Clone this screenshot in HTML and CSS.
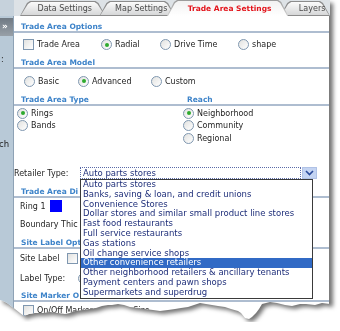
FILE: index.html
```html
<!DOCTYPE html>
<html lang="en">
<head>
  <meta charset="UTF-8" />
  <title>Trade Area Settings</title>
  <link rel="stylesheet" href="styles.css">
</head>
<body>
  <div class="shot">
    <div class="window">
      <div class="tabbar">
        <div class="tab tab-data"><span>Data Settings</span></div>
        <div class="tab tab-map"><span>Map Settings</span></div>
        <div class="tab tab-active"><span>Trade Area Settings</span></div>
        <div class="tab tab-layers"><span>Layers</span></div>
      </div>

      <div class="body">
        <div class="strip">
          <div class="collapse">&raquo;</div>
          <div class="frag-dot">:</div>
          <div class="frag-text">ch</div>
        </div>

        <div class="panel">
          <div class="sec sec-first">Trade Area Options</div>
          <div class="row row-opts">
            <label class="opt w78"><i class="check"></i>Trade Area</label>
            <label class="opt w59"><i class="radio on"></i>Radial</label>
            <label class="opt w78"><i class="radio"></i>Drive Time</label>
            <label class="opt"><i class="radio"></i>shape</label>
          </div>

          <div class="sec">Trade Area Model</div>
          <div class="row row-model">
            <label class="opt w54"><i class="radio"></i>Basic</label>
            <label class="opt w73"><i class="radio on"></i>Advanced</label>
            <label class="opt"><i class="radio"></i>Custom</label>
          </div>

          <div class="sec sec-split">
            <span class="col-left">Trade Area Type</span>
            <span>Reach</span>
          </div>
          <div class="types">
            <div class="type-col type-left">
              <label class="opt line"><i class="radio on"></i>Rings</label>
              <label class="opt line"><i class="radio"></i>Bands</label>
            </div>
            <div class="type-col">
              <label class="opt line"><i class="radio on"></i>Neighborhood</label>
              <label class="opt line"><i class="radio"></i>Community</label>
              <label class="opt line"><i class="radio"></i>Regional</label>
            </div>
          </div>

          <div class="row retail">
            <span class="retail-label">Retailer Type:</span>
            <div class="select">
              <span class="select-text">Auto parts stores</span>
              <span class="select-btn">
                <svg width="9" height="6" viewBox="0 0 9 6"><path d="M1 1 L4.5 4.5 L8 1" fill="none" stroke="#2a4a9a" stroke-width="1.6"/></svg>
              </span>
            </div>
          </div>

          <div class="sec sec-display"><span class="cut">Trade Area Di</span></div>
          <div class="row row-ring">
            <span class="ring-label">Ring 1</span>
            <span class="swatch"></span>
          </div>
          <div class="row row-boundary">
            <span class="indent cut">Boundary Thic</span>
          </div>

          <div class="sec sec-label"><span class="cut">Site Label Opt</span></div>
          <div class="row row-sitelabel">
            <span class="site-label">Site Label</span>
            <i class="check"></i>
          </div>
          <div class="row row-labeltype">
            <span class="label-type">Label Type:</span>
            <i class="radio"></i>
          </div>

          <div class="sec"><span class="cut">Site Marker O</span></div>
          <div class="row row-marker">
            <label class="opt w80"><i class="check"></i>On/Off Markers</label>
            <span>Marker Size</span>
          </div>

          <ul class="list">
            <li>Auto parts stores</li>
            <li>Banks, saving &amp; loan, and credit unions</li>
            <li>Convenience Stores</li>
            <li>Dollar stores and similar small product line stores</li>
            <li>Fast food restaurants</li>
            <li>Full service restaurants</li>
            <li>Gas stations</li>
            <li>Oil change service shops</li>
            <li class="selected">Other convenience retailers</li>
            <li>Other neighborhood retailers &amp; ancillary tenants</li>
            <li>Payment centers and pawn shops</li>
            <li>Supermarkets and superdrug</li>
          </ul>
        </div>
      </div>
    </div>
  </div>
</body>
</html>
```

FILE: styles.css
```css
html, body {
  margin: 0;
  padding: 0;
  background: #fff;
  font-family: "DejaVu Sans", Verdana, sans-serif;
  font-size: 8px;
  color: #1e1e1e;
}

.shot {
  width: 330px;
  filter: drop-shadow(3px 3px 2px rgba(0,0,0,0.55));
}

.window {
  height: 322px;
  display: flex;
  flex-direction: column;
  background: #fff;
  clip-path: polygon(0 0, 330px 0, 330px 304px, 322px 303px, 315px 305px, 306px 304px, 300px 304px, 292px 306px, 285px 305px, 277px 303px, 270px 302px, 262px 304px, 259px 309px, 256px 313px, 252px 317px, 249px 319px, 245px 318px, 241px 313px, 238px 311px, 231px 309px, 225px 307px, 218px 306px, 212px 305px, 206px 304px, 200px 303px, 194px 305px, 188px 307px, 181px 308px, 175px 309px, 168px 310px, 160px 311px, 153px 310px, 145px 309px, 138px 308px, 130px 307px, 124px 305px, 118px 304px, 112px 305px, 108px 305px, 102px 306px, 96px 308px, 90px 309px, 83px 310px, 75px 311px, 70px 313px, 65px 314px, 58px 313px, 50px 312px, 43px 313px, 35px 313px, 29px 314px, 24px 316px, 20px 313px, 15px 309px, 11px 306px, 7px 303px, 3px 301px, 0 300px);
}

/* tabs */
.tabbar {
  height: 16px;
  flex: none;
  display: flex;
  align-items: flex-end;
  padding-left: 20px;
  background: linear-gradient(to right, #c6d2dc 0, #c6d2dc 14px, #dde2e6 14px);
}

.tab {
  position: relative;
  height: 15px;
  display: flex;
  align-items: center;
  justify-content: center;
  color: #4a4a4a;
  box-sizing: border-box;
  padding-left: 4px;
}

.tab::before,
.tab::after {
  content: "";
  position: absolute;
  clip-path: polygon(0 100%, 7px 2px, 10px 0, calc(100% - 10px) 0, calc(100% - 7px) 2px, 100% 100%);
}

.tab::before {
  inset: 0;
  background: #8c8c8c;
}

.tab::after {
  inset: 1px 1px 1px 1px;
  background: linear-gradient(#fbfbfb, #d6d7d8);
}

.tab span {
  position: relative;
  z-index: 1;
}

.tab-data { width: 86px; z-index: 1; }
.tab-map { width: 76px; margin-left: -6px; z-index: 2; padding-left: 8px; }
.tab-active { width: 122px; margin-left: -8px; z-index: 4; height: 16px; }
.tab-layers { width: 50px; margin-left: -8px; z-index: 3; padding-left: 14px; }

.tab-active::before {
  background: linear-gradient(#9a9a9a, #d0d0d0);
}

.tab-active::after {
  inset: 1px 1px 0 1px;
  background: linear-gradient(#f2f2f2, #fff);
}

.tab-active span {
  color: #e3141b;
  font-weight: bold;
  font-size: 7.5px;
}

/* body */
.body {
  flex: 1;
  display: flex;
}

.strip {
  width: 13px;
  flex: none;
  border-right: 1px solid #8ea2b5;
  background: #b8c9d7;
  overflow: hidden;
  color: #222;
}

.collapse {
  margin-top: 2px;
  height: 18px;
  line-height: 17px;
  padding-left: 2px;
  background: linear-gradient(#6f7983, #98a0a8);
  color: #fff;
  font-weight: bold;
  font-size: 9px;
}

.frag-dot {
  margin-top: 19px;
  padding-left: 1px;
  line-height: 10px;
}

.frag-text {
  margin-top: 73px;
  margin-left: -1px;
  line-height: 12px;
  font-size: 8.5px;
}

.panel {
  position: relative;
  flex: 1;
  border-right: 1px solid #7c7c7c;
}

.sec {
  height: 11px;
  padding-top: 2px;
  box-sizing: border-box;
  line-height: 9px;
  padding-left: 7px;
  font-weight: bold;
  font-size: 7.5px;
  color: #3d83c9;
  border-bottom: 2px solid #aebdd0;
  box-sizing: content-box;
  height: 9px;
  white-space: nowrap;
}

.sec-first { margin-top: 4px; }
.sec-display { margin-top: 6px; }
.sec-label { margin-top: 2px; }

.cut {
  display: inline-block;
  max-width: 59px;
  overflow: hidden;
  vertical-align: top;
}

.indent.cut { max-width: 60px; }

.sec-split {
  display: flex;
}

.col-left {
  width: 166px;
}

.row {
  display: flex;
  align-items: center;
  white-space: nowrap;
}

.row-opts { height: 23px; padding-left: 9px; }
.row-model { height: 24px; padding-left: 10px; }

.opt {
  display: flex;
  align-items: center;
  gap: 3px;
}

.w54 { width: 54px; }
.w59 { width: 59px; }
.w73 { width: 73px; }
.w78 { width: 78px; }
.w80 { width: 80px; }

.check,
.radio {
  display: inline-block;
  width: 9px;
  height: 9px;
  border: 1px solid #7f97b0;
  background: linear-gradient(135deg, #e2e2e0, #fff);
  flex: none;
}

.radio {
  border-radius: 50%;
  position: relative;
}

.radio.on::after {
  content: "";
  position: absolute;
  left: 2.5px;
  top: 2.5px;
  width: 4px;
  height: 4px;
  border-radius: 50%;
  background: #2eaa2e;
}

.types {
  height: 61px;
  display: flex;
  padding-top: 1px;
  box-sizing: border-box;
}

.type-col {
  display: flex;
  flex-direction: column;
}

.type-left {
  width: 166px;
  padding-left: 3px;
}

.line {
  height: 12.5px;
}

.retail {
  height: 12px;
}

.retail-label {
  width: 66px;
}

.select {
  width: 237px;
  height: 12px;
  display: flex;
  color: #1f2f7a;
  font-size: 8.5px;
}

.select-text {
  flex: 1;
  border: 1px dotted #5a6aa8;
  padding-left: 2px;
  line-height: 10px;
}

.select-btn {
  width: 15px;
  margin-left: 1px;
  display: flex;
  align-items: center;
  justify-content: center;
  background: #c4d4f2;
  border: 1px solid #b0c2e6;
  box-sizing: border-box;
}

.row-ring { height: 16px; }

.ring-label {
  width: 30px;
  padding-left: 6px;
}

.swatch {
  width: 12px;
  height: 12px;
  background: #0000ff;
}

.row-boundary { height: 20px; }
.indent { padding-left: 6px; }

.row-sitelabel { height: 18px; }

.site-label {
  width: 47px;
  padding-left: 6px;
}

.row-labeltype { height: 22px; }

.label-type {
  width: 58px;
  padding-left: 6px;
}

.row-marker {
  height: 16px;
  padding-left: 9px;
}

/* open dropdown */
.list {
  position: absolute;
  left: 66px;
  top: 163px;
  width: 233px;
  margin: 0;
  padding: 0;
  list-style: none;
  background: #fff;
  border: 1px solid #3a3a3a;
  box-sizing: border-box;
  color: #1f2f7a;
  font-size: 8.5px;
  z-index: 5;
}

.list li {
  height: 9.8px;
  line-height: 9.8px;
  padding-left: 2px;
  white-space: nowrap;
  overflow: hidden;
}

.list li.selected {
  background: #316ac5;
  color: #fff;
}
```
